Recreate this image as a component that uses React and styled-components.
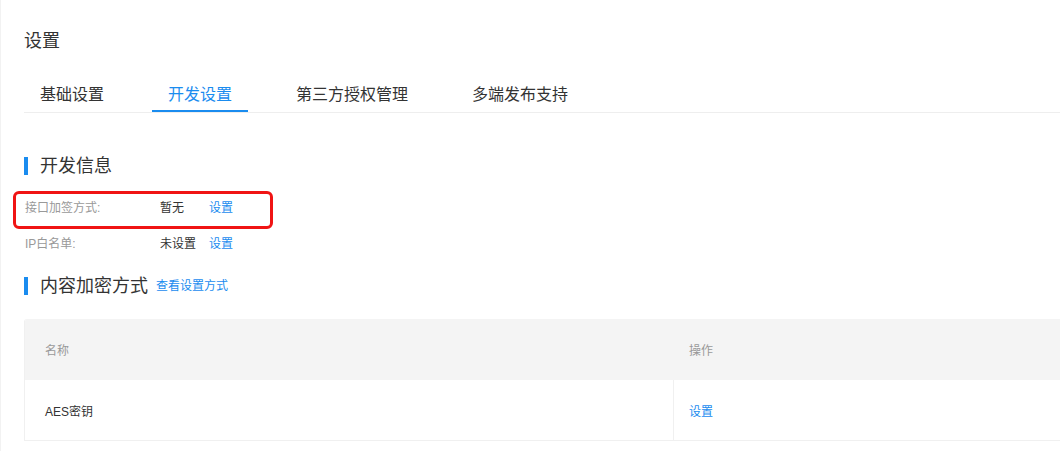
import styled, { createGlobalStyle } from 'styled-components'

const GlobalStyle = createGlobalStyle`
  html, body {
    margin: 0;
    padding: 0;
    background: #fff;
    overflow: hidden;
  }
  body {
    font-family: "Liberation Sans", "Noto Sans CJK SC", sans-serif;
    color: #333;
  }
`

const tabs = ['基础设置', '开发设置', '第三方授权管理', '多端发布支持']

const devInfo = [
  { label: '接口加签方式:', value: '暂无', marked: true },
  { label: 'IP白名单:', value: '未设置' },
]

const App = () => {
  return (
    <Page>
      <GlobalStyle />
      <Title>设置</Title>
      <TabBar>
        {tabs.map((t, i) => (
          <Tab key={t} active={i === 1}>{t}</Tab>
        ))}
      </TabBar>

      <SectionHead>
        <Bar />
        <SectionTitle>开发信息</SectionTitle>
      </SectionHead>
      <InfoList>
        {devInfo.map(row => (
          <InfoRow key={row.label}>
            <Label>{row.label}</Label>
            <Value>{row.value}</Value>
            <Link>设置</Link>
            {row.marked && <Marker />}
          </InfoRow>
        ))}
      </InfoList>

      <SectionHead second>
        <Bar />
        <SectionTitle>内容加密方式</SectionTitle>
        <HeadLink>查看设置方式</HeadLink>
      </SectionHead>

      <Table>
        <HeadCell>名称</HeadCell>
        <HeadCell last>操作</HeadCell>
        <Cell>AES密钥</Cell>
        <Cell last><Link>设置</Link></Cell>
      </Table>
    </Page>
  )
}

const Page = styled.div`
  width: 1100px;
  min-height: 451px;
  box-sizing: border-box;
  border-left: 1px solid #f2f2f2;
  padding: 29px 0 0 23px;
`

const Title = styled.h1`
  margin: 0;
  font-size: 18px;
  font-weight: 400;
  line-height: 24px;
  color: #333;
`

const TabBar = styled.div`
  display: flex;
  gap: 32px;
  margin-top: 28px;
  border-bottom: 1px solid #eeeeee;
`

const Tab = styled.div`
  padding: 0 16px;
  height: 31px;
  line-height: 27px;
  box-sizing: border-box;
  font-size: 16px;
  color: ${p => (p.active ? '#1a8cef' : '#333')};
  border-bottom: 2px solid ${p => (p.active ? '#1a8cef' : 'transparent')};
  cursor: pointer;
`

const SectionHead = styled.div`
  display: flex;
  align-items: center;
  height: 18px;
  margin-top: ${p => (p.second ? '17px' : '44px')};
`

const Bar = styled.span`
  width: 4px;
  height: 18px;
  background: #1a8cef;
  margin-right: 12px;
`

const SectionTitle = styled.h2`
  margin: 0;
  font-size: 18px;
  font-weight: 400;
  line-height: 18px;
  color: #333;
`

const HeadLink = styled.a`
  margin-left: 8px;
  font-size: 12px;
  line-height: 18px;
  color: #1a8cef;
  cursor: pointer;
`

const InfoList = styled.div`
  margin-top: 14px;
`

const InfoRow = styled.div`
  position: relative;
  display: flex;
  align-items: center;
  height: 35px;
  padding-top: 1px;
  font-size: 12px;
  &:first-child {
    padding-top: 0;
  }
`

const Label = styled.span`
  width: 136px;
  padding-left: 1px;
  box-sizing: border-box;
  color: #999;
`

const Value = styled.span`
  width: 49px;
  color: #333;
`

const Link = styled.a`
  font-size: 12px;
  color: #1a8cef;
  cursor: pointer;
`

const Marker = styled.div`
  position: absolute;
  left: -11px;
  top: 2px;
  width: 260px;
  height: 38px;
  box-sizing: border-box;
  border: 3px solid #f01414;
  border-radius: 6px;
  pointer-events: none;
`

const Table = styled.div`
  display: grid;
  grid-template-columns: 648px 1fr;
  margin-top: 24px;
  border-left: 1px solid #f0f0f0;
  border-bottom: 1px solid #f0f0f0;
  border-radius: 3px 0 0 0;
  overflow: hidden;
`

const HeadCell = styled.div`
  height: 61px;
  display: flex;
  align-items: center;
  padding-left: ${p => (p.last ? '16px' : '20px')};
  background: #f4f4f4;
  font-size: 12px;
  color: #999;
`

const Cell = styled.div`
  height: 60px;
  display: flex;
  align-items: center;
  padding-left: ${p => (p.last ? '15px' : '20px')};
  border-left: ${p => (p.last ? '1px solid #f0f0f0' : 'none')};
  font-size: 12px;
  color: #333;
`

export default App
